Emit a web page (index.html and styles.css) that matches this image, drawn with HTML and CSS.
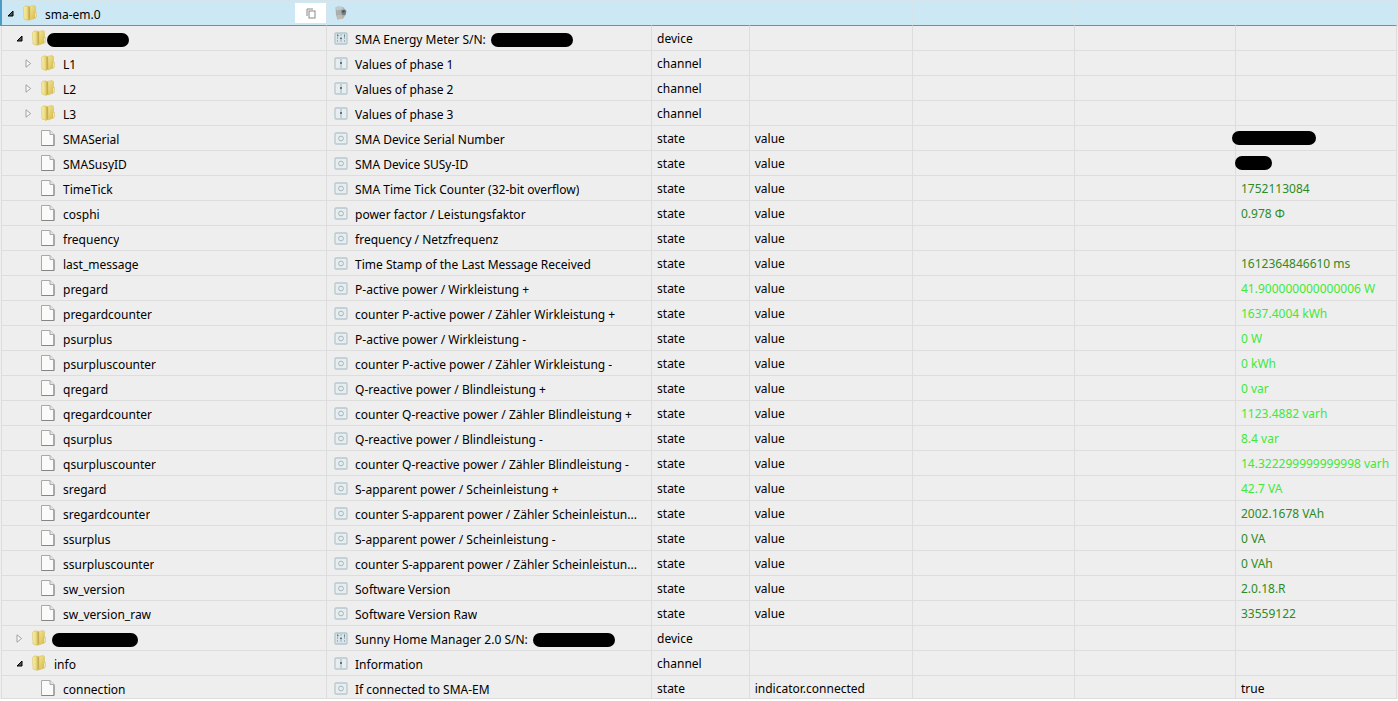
FILE: index.html
```html
<!DOCTYPE html>
<html lang="en">
<head>
<meta charset="utf-8">
<title>Objects</title>
<link rel="stylesheet" href="styles.css">
</head>
<body>
<svg class="sprite" aria-hidden="true">
  <defs>
    <linearGradient id="gold" x1="0" x2="1" y1="0" y2="0">
      <stop offset="0" stop-color="#f8f0b0"/><stop offset="0.5" stop-color="#ecdc86"/><stop offset="1" stop-color="#c9ad48"/>
    </linearGradient>
    <linearGradient id="gold2" x1="0" x2="1" y1="0" y2="1">
      <stop offset="0" stop-color="#f5e99c"/><stop offset="1" stop-color="#d6b945"/>
    </linearGradient>
  </defs>
  <symbol id="folder" viewBox="0 0 14 16">
    <path d="M6 1.500 11 .5 12.500 1.500V13L7 15z" fill="url(#gold2)" stroke="#d3bc5e" stroke-width=".5"/>
    <path d="M.5 2.500 2 1h3.500l1.500 1.500V14L5.500 15.500 1 14z" fill="url(#gold)" stroke="#d6c25e" stroke-width=".6"/>
    <path d="M6.200 2v12.500" stroke="#bfa24a" stroke-width=".8"/>
    <path d="M12 7.500h1.500v4.500l-1.500 1z" fill="#f8f3cf" stroke="#cdb75c" stroke-width=".5"/>
  </symbol>
  <symbol id="page" viewBox="0 0 14 16">
    <path d="M.5.5h8.500l4 4v11H.5z" fill="#fafaf9" stroke="#a8a8a8"/>
    <path d="M.5 15.500H13V5" fill="none" stroke="#858585"/>
    <path d="M9 .5v4h4" fill="#e6e6e6" stroke="#a8a8a8"/>
  </symbol>
  <symbol id="open" viewBox="0 0 7 7"><path d="M1 6 6 1v5z" fill="#555" stroke="#000"/></symbol>
  <symbol id="closed" viewBox="0 0 7 9"><path d="M1 .8 5.600 4.500 1 8.200z" fill="#f7f7f7" stroke="#999" stroke-width=".9"/></symbol>
  <symbol id="state" viewBox="0 0 14 13">
    <rect x="1" y="1" width="12" height="11" rx="1" fill="#e8eef0" stroke="#b7c9cf" stroke-width="1.300"/>
    <circle cx="7" cy="6.500" r="2.400" fill="none" stroke="#a3b5bc"/>
  </symbol>
  <symbol id="channel" viewBox="0 0 14 13">
    <rect x="1" y="1" width="12" height="11" rx="1" fill="#e8eef0" stroke="#b7c9cf" stroke-width="1.300"/>
    <path d="M7 2v9" stroke="#9cb0b8"/><path d="M6 6h2" stroke="#5e747e" stroke-width="2"/>
  </symbol>
  <symbol id="device" viewBox="0 0 14 13">
    <rect x="1" y="1" width="12" height="11" rx="1" fill="#d9e5e9" stroke="#b2c6ce" stroke-width="1.300"/>
    <path d="M3.500 2v9M7 2v9M10.500 2v9" stroke="#9cb2bb" stroke-dasharray="2 1"/>
    <path d="M3 3.500h1.500M6 6.500h2M10 4h1" stroke="#5b7380" stroke-width="1.500"/>
  </symbol>
  <symbol id="adapter" viewBox="0 0 14 14">
    <path d="M1.500 1.500 4 .5 9 1 12 4.500 11.500 9 9 12.500 3.500 13.500 2 9z" fill="#a9aeaf"/>
    <path d="M1.500 1.500 4 .5 8 1 9 3 3 4.500z" fill="#c5c9c9"/>
    <path d="M7 4.500 11 3.500 12.500 5 11.500 9 8 9z" fill="#7b8183"/>
    <path d="M3 9h5l1 3.500-5.500 1z" fill="#c2bbb0"/>
    <circle cx="9.500" cy="5.500" r="1.300" fill="#4c5356"/>
  </symbol>
  <symbol id="copy" viewBox="0 0 10 11">
    <path d="M1 8V1h6" fill="none" stroke="#888"/><rect x="3" y="3" width="6" height="7" fill="none" stroke="#888"/>
  </symbol>
</svg>
<main class="objects">
<table class="tree">
  <colgroup><col class="c-id"><col class="c-name"><col class="c-type"><col class="c-role"><col class="c-room"><col class="c-func"><col class="c-value"></colgroup>
  <tbody>
  <tr class="selected"><td><div class="node"><button class="toggle" aria-label="Collapse"><svg class="i-open"><use href="#open"/></svg></button><svg class="i-node"><use href="#folder"/></svg><span class="label">sma-em.0</span><button class="copy" aria-label="Copy"><svg class="i-copy"><use href="#copy"/></svg></button></div></td><td><div class="name"><svg class="i-adapter"><use href="#adapter"/></svg></div></td><td></td><td></td><td></td><td></td><td></td></tr>
  <tr><td><div class="node l1"><button class="toggle" aria-label="Collapse"><svg class="i-open"><use href="#open"/></svg></button><svg class="i-node"><use href="#folder"/></svg><span class="mask near"></span></div></td><td><div class="name"><svg class="i-kind"><use href="#device"/></svg><span class="label">SMA Energy Meter S/N:</span><span class="mask after"></span></div></td><td>device</td><td></td><td></td><td></td><td></td></tr>
  <tr><td><div class="node l2"><button class="toggle" aria-label="Expand"><svg class="i-closed"><use href="#closed"/></svg></button><svg class="i-node"><use href="#folder"/></svg><span class="label">L1</span></div></td><td><div class="name"><svg class="i-kind"><use href="#channel"/></svg><span class="label">Values of phase 1</span></div></td><td>channel</td><td></td><td></td><td></td><td></td></tr>
  <tr><td><div class="node l2"><button class="toggle" aria-label="Expand"><svg class="i-closed"><use href="#closed"/></svg></button><svg class="i-node"><use href="#folder"/></svg><span class="label">L2</span></div></td><td><div class="name"><svg class="i-kind"><use href="#channel"/></svg><span class="label">Values of phase 2</span></div></td><td>channel</td><td></td><td></td><td></td><td></td></tr>
  <tr><td><div class="node l2"><button class="toggle" aria-label="Expand"><svg class="i-closed"><use href="#closed"/></svg></button><svg class="i-node"><use href="#folder"/></svg><span class="label">L3</span></div></td><td><div class="name"><svg class="i-kind"><use href="#channel"/></svg><span class="label">Values of phase 3</span></div></td><td>channel</td><td></td><td></td><td></td><td></td></tr>
  <tr><td><div class="node leaf"><svg class="i-node"><use href="#page"/></svg><span class="label">SMASerial</span></div></td><td><div class="name"><svg class="i-kind"><use href="#state"/></svg><span class="label">SMA Device Serial Number</span></div></td><td>state</td><td>value</td><td></td><td></td><td class="masked"><span class="mask over"></span></td></tr>
  <tr><td><div class="node leaf"><svg class="i-node"><use href="#page"/></svg><span class="label">SMASusyID</span></div></td><td><div class="name"><svg class="i-kind"><use href="#state"/></svg><span class="label">SMA Device SUSy-ID</span></div></td><td>state</td><td>value</td><td></td><td></td><td class="masked"><span class="mask over short"></span></td></tr>
  <tr><td><div class="node leaf"><svg class="i-node"><use href="#page"/></svg><span class="label">TimeTick</span></div></td><td><div class="name"><svg class="i-kind"><use href="#state"/></svg><span class="label">SMA Time Tick Counter (32-bit overflow)</span></div></td><td>state</td><td>value</td><td></td><td></td><td class="ok">1752113084</td></tr>
  <tr><td><div class="node leaf"><svg class="i-node"><use href="#page"/></svg><span class="label">cosphi</span></div></td><td><div class="name"><svg class="i-kind"><use href="#state"/></svg><span class="label">power factor / Leistungsfaktor</span></div></td><td>state</td><td>value</td><td></td><td></td><td class="ok">0.978 Φ</td></tr>
  <tr><td><div class="node leaf"><svg class="i-node"><use href="#page"/></svg><span class="label">frequency</span></div></td><td><div class="name"><svg class="i-kind"><use href="#state"/></svg><span class="label">frequency / Netzfrequenz</span></div></td><td>state</td><td>value</td><td></td><td></td><td></td></tr>
  <tr><td><div class="node leaf"><svg class="i-node"><use href="#page"/></svg><span class="label">last_message</span></div></td><td><div class="name"><svg class="i-kind"><use href="#state"/></svg><span class="label">Time Stamp of the Last Message Received</span></div></td><td>state</td><td>value</td><td></td><td></td><td class="ok">1612364846610 ms</td></tr>
  <tr><td><div class="node leaf"><svg class="i-node"><use href="#page"/></svg><span class="label">pregard</span></div></td><td><div class="name"><svg class="i-kind"><use href="#state"/></svg><span class="label">P-active power / Wirkleistung +</span></div></td><td>state</td><td>value</td><td></td><td></td><td class="fresh">41.900000000000006 W</td></tr>
  <tr><td><div class="node leaf"><svg class="i-node"><use href="#page"/></svg><span class="label">pregardcounter</span></div></td><td><div class="name"><svg class="i-kind"><use href="#state"/></svg><span class="label">counter P-active power / Zähler Wirkleistung +</span></div></td><td>state</td><td>value</td><td></td><td></td><td class="fresh">1637.4004 kWh</td></tr>
  <tr><td><div class="node leaf"><svg class="i-node"><use href="#page"/></svg><span class="label">psurplus</span></div></td><td><div class="name"><svg class="i-kind"><use href="#state"/></svg><span class="label">P-active power / Wirkleistung -</span></div></td><td>state</td><td>value</td><td></td><td></td><td class="fresh">0 W</td></tr>
  <tr><td><div class="node leaf"><svg class="i-node"><use href="#page"/></svg><span class="label">psurpluscounter</span></div></td><td><div class="name"><svg class="i-kind"><use href="#state"/></svg><span class="label">counter P-active power / Zähler Wirkleistung -</span></div></td><td>state</td><td>value</td><td></td><td></td><td class="fresh">0 kWh</td></tr>
  <tr><td><div class="node leaf"><svg class="i-node"><use href="#page"/></svg><span class="label">qregard</span></div></td><td><div class="name"><svg class="i-kind"><use href="#state"/></svg><span class="label">Q-reactive power / Blindleistung +</span></div></td><td>state</td><td>value</td><td></td><td></td><td class="fresh">0 var</td></tr>
  <tr><td><div class="node leaf"><svg class="i-node"><use href="#page"/></svg><span class="label">qregardcounter</span></div></td><td><div class="name"><svg class="i-kind"><use href="#state"/></svg><span class="label">counter Q-reactive power / Zähler Blindleistung +</span></div></td><td>state</td><td>value</td><td></td><td></td><td class="fresh">1123.4882 varh</td></tr>
  <tr><td><div class="node leaf"><svg class="i-node"><use href="#page"/></svg><span class="label">qsurplus</span></div></td><td><div class="name"><svg class="i-kind"><use href="#state"/></svg><span class="label">Q-reactive power / Blindleistung -</span></div></td><td>state</td><td>value</td><td></td><td></td><td class="fresh">8.4 var</td></tr>
  <tr><td><div class="node leaf"><svg class="i-node"><use href="#page"/></svg><span class="label">qsurpluscounter</span></div></td><td><div class="name"><svg class="i-kind"><use href="#state"/></svg><span class="label">counter Q-reactive power / Zähler Blindleistung -</span></div></td><td>state</td><td>value</td><td></td><td></td><td class="fresh">14.322299999999998 varh</td></tr>
  <tr><td><div class="node leaf"><svg class="i-node"><use href="#page"/></svg><span class="label">sregard</span></div></td><td><div class="name"><svg class="i-kind"><use href="#state"/></svg><span class="label">S-apparent power / Scheinleistung +</span></div></td><td>state</td><td>value</td><td></td><td></td><td class="fresh">42.7 VA</td></tr>
  <tr><td><div class="node leaf"><svg class="i-node"><use href="#page"/></svg><span class="label">sregardcounter</span></div></td><td><div class="name"><svg class="i-kind"><use href="#state"/></svg><span class="label">counter S-apparent power / Zähler Scheinleistun...</span></div></td><td>state</td><td>value</td><td></td><td></td><td class="ok">2002.1678 VAh</td></tr>
  <tr><td><div class="node leaf"><svg class="i-node"><use href="#page"/></svg><span class="label">ssurplus</span></div></td><td><div class="name"><svg class="i-kind"><use href="#state"/></svg><span class="label">S-apparent power / Scheinleistung -</span></div></td><td>state</td><td>value</td><td></td><td></td><td class="ok">0 VA</td></tr>
  <tr><td><div class="node leaf"><svg class="i-node"><use href="#page"/></svg><span class="label">ssurpluscounter</span></div></td><td><div class="name"><svg class="i-kind"><use href="#state"/></svg><span class="label">counter S-apparent power / Zähler Scheinleistun...</span></div></td><td>state</td><td>value</td><td></td><td></td><td class="ok">0 VAh</td></tr>
  <tr><td><div class="node leaf"><svg class="i-node"><use href="#page"/></svg><span class="label">sw_version</span></div></td><td><div class="name"><svg class="i-kind"><use href="#state"/></svg><span class="label">Software Version</span></div></td><td>state</td><td>value</td><td></td><td></td><td class="ok">2.0.18.R</td></tr>
  <tr><td><div class="node leaf"><svg class="i-node"><use href="#page"/></svg><span class="label">sw_version_raw</span></div></td><td><div class="name"><svg class="i-kind"><use href="#state"/></svg><span class="label">Software Version Raw</span></div></td><td>state</td><td>value</td><td></td><td></td><td class="ok">33559122</td></tr>
  <tr><td><div class="node l1"><button class="toggle" aria-label="Expand"><svg class="i-closed"><use href="#closed"/></svg></button><svg class="i-node"><use href="#folder"/></svg><span class="mask long"></span></div></td><td><div class="name"><svg class="i-kind"><use href="#device"/></svg><span class="label">Sunny Home Manager 2.0 S/N:</span><span class="mask after"></span></div></td><td>device</td><td></td><td></td><td></td><td></td></tr>
  <tr><td><div class="node l1"><button class="toggle" aria-label="Collapse"><svg class="i-open"><use href="#open"/></svg></button><svg class="i-node"><use href="#folder"/></svg><span class="label">info</span></div></td><td><div class="name"><svg class="i-kind"><use href="#channel"/></svg><span class="label">Information</span></div></td><td>channel</td><td></td><td></td><td></td><td></td></tr>
  <tr class="last"><td><div class="node leaf"><svg class="i-node"><use href="#page"/></svg><span class="label">connection</span></div></td><td><div class="name"><svg class="i-kind"><use href="#state"/></svg><span class="label">If connected to SMA-EM</span></div></td><td>state</td><td>indicator.connected</td><td></td><td></td><td>true</td></tr>
  </tbody>
</table>
</main>
</body>
</html>
```
FILE: styles.css
```css
* { box-sizing: border-box; }
body {
  margin: 0;
  background: #fff;
  color: #000;
  font: 12px/18px "Noto Sans", "Open Sans", sans-serif;
}
.sprite { position: absolute; width: 0; height: 0; }
.objects { padding: 0 1px; background: #eee; }
.tree {
  width: 100%;
  table-layout: fixed;
  border-collapse: separate;
  border-spacing: 0;
  border-left: 1px solid #ddd;
}
.c-id { width: 23.3%; }
.c-name { width: 23.3%; }
.c-type { width: 7%; }
.c-role { width: 11.7%; }
.c-room { width: 11.6%; }
.c-value { width: 161px; }
td {
  height: 25px;
  padding: 4px 0 0 5px;
  vertical-align: top;
  white-space: nowrap;
  border-right: 1px solid #ddd;
  border-bottom: 1px solid #ddd;
}
td:first-child, td:nth-child(2) { padding: 0; }
.selected td {
  height: 26px;
  background: #cde8f5;
  border-bottom-color: #4a9cc7;
  border-right-color: #d5e3ea;
  border-top: 1px solid #d5e3ea;
}
.selected td:first-child { box-shadow: -2px 0 0 #4a9cc7; }
.selected td:last-child { box-shadow: 1px 0 0 #cde8f5; }
.last td { height: 23px; }
.node, .name { display: flex; align-items: flex-start; height: 24px; }
.last .node, .last .name { height: 22px; }
.node { padding-left: 4px; }
.node.l1 { padding-left: 13px; }
.node.l2 { padding-left: 22px; }
.node.leaf { padding-left: 39px; }
.name { padding: 0 4px 0 7px; }
.label { overflow: hidden; text-overflow: ellipsis; padding-top: 5px; }
.node .label { padding-left: 8px; }
.name .label { padding-left: 7px; }
button { border: 0; padding: 0; background: none; display: flex; align-items: center; justify-content: center; }
.toggle { width: 9px; height: 16px; margin: 4px 8px 0 0; }
svg { flex: none; display: block; }
.i-open { width: 7px; height: 7px; }
.i-closed { width: 7px; height: 9px; }
.i-node { width: 14px; height: 16px; margin-top: 4px; }
.i-kind { width: 14px; height: 13px; margin-top: 6px; }
.i-adapter { width: 14px; height: 14px; margin-top: 5px; }
.i-copy { width: 10px; height: 11px; }
.copy { width: 31px; height: 20px; margin: 2px 0 0 auto; background: #fff; }
.mask { flex: none; width: 82px; height: 14px; margin-top: 7px; border-radius: 7px; background: #000; }
.near { margin-left: 1px; }
.long { width: 86px; margin-left: 6px; }
.after { margin-left: 5px; }
.masked { position: relative; }
.over { position: absolute; left: -4px; top: 5px; width: 84px; margin: 0; }
.short { left: -1px; width: 37px; }
.ok { color: #2e8b22; }
.fresh { color: #3fe83a; }
```
